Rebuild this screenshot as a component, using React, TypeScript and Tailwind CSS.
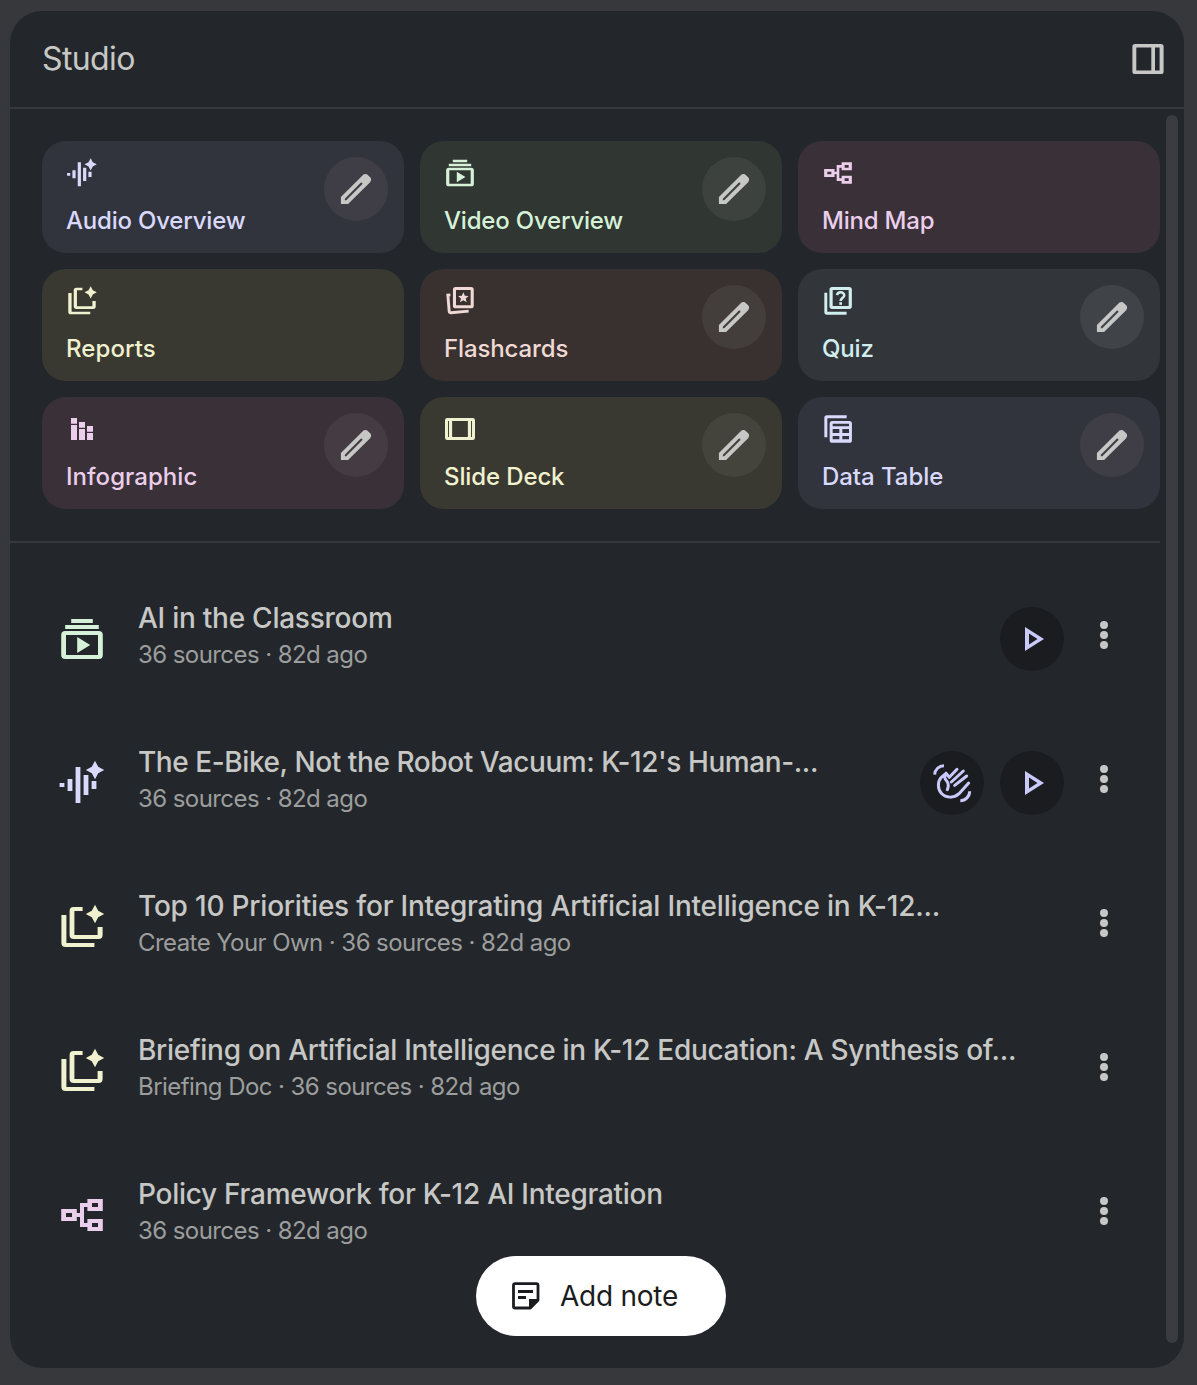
import type { ReactNode } from "react";

const STAR = "M18.5 10.1 16.9 7.1 13.9 5.5l3-1.6L18.5.9l1.6 3 3 1.6-3 1.6z";

const icons: Record<string, ReactNode> = {
  audio: (
    <>
      <path d="M.8 12h2.4v2H.8zM4.8 10h2.4v6H4.8zM8.8 4h2.4v18H8.8zM12.8 8h2.4v10h-2.4zM16.8 11h2.4v4h-2.4z" />
      <path d={STAR} />
    </>
  ),
  video: (
    <>
      <path fillRule="evenodd" d="M3.6 8h16.8a2 2 0 0 1 2 2v10a2 2 0 0 1-2 2H3.6a2 2 0 0 1-2-2V10a2 2 0 0 1 2-2zM4 10v10h16V10z" />
      <path d="M3.6 5h16.8v2H3.6zM6.6 2h10.8v2H6.6zM9.6 11v8l6.5-4z" />
    </>
  ),
  mindmap: (
    <path
      fillRule="evenodd"
      d="M1.6 9h7.8v2H11V6h3.7V4h7.7v6h-7.7V8H13v8h1.7v-2h7.7v6h-7.7v-2H11v-5H9.4v2H1.6zM4 11v2h3v-2zM17 6v2h3V6zM17 16v2h3v-2z"
    />
  ),
  reports: (
    <>
      <path d="M1.7 6h2.5v14h14v2H3.7a2 2 0 0 1-2-2z" />
      <path d="M12.3 2v2H8.2v12h11.6v-4h2.5v4a2 2 0 0 1-2 2H7.8a2 2 0 0 1-2-2V4a2 2 0 0 1 2-2z" />
      <path d={STAR} />
    </>
  ),
  flashcards: (
    <>
      <path fillRule="evenodd" d="M8.7 1.5h11.6a2 2 0 0 1 2 2v12a2 2 0 0 1-2 2H8.7a2 2 0 0 1-2-2v-12a2 2 0 0 1 2-2zM9 3.8v11.4h11V3.8z" />
      <path d="m14.5 5.4 1.15 2.6 2.75.25-2.1 1.85.65 2.75-2.45-1.45-2.45 1.45.65-2.75-2.1-1.85 2.75-.25z" />
      <path d="M4.8 7.4 2.9 7.6 3.9 19.7a1.2 1.2 0 0 0 1.3 1.1l13.3-1.2" fill="none" stroke="currentColor" strokeWidth="2.2" />
    </>
  ),
  quiz: (
    <>
      <path d="M1.75 5.8h2.2v14.3h14.5v2.2H3.75a2 2 0 0 1-2-2z" />
      <path fillRule="evenodd" d="M7.6 1.5h12.8a2 2 0 0 1 2 2V16a2 2 0 0 1-2 2H7.6a2 2 0 0 1-2-2V3.5a2 2 0 0 1 2-2zM8 3.8v12h12v-12z" />
      <path d="M11.3 7.6C11.5 6.1 12.6 5.5 14 5.5s2.7.9 2.7 2.2C16.7 9.5 14 9.7 14 12" fill="none" stroke="currentColor" strokeWidth="1.9" />
      <path d="M13 12.9h2v2h-2z" />
    </>
  ),
  infographic: (
    <path d="M3.75 3.75h4.5V8h-4.5zM3.75 9h4.5v11.25h-4.5zM9.75 6.75h4.5V11h-4.5zM9.75 12h4.5v8.25h-4.5zM15.75 9.75h4.5V14h-4.5zM15.75 15h4.5v5.25h-4.5z" />
  ),
  slides: (
    <path
      fillRule="evenodd"
      d="M2.5 3.75h19a1.75 1.75 0 0 1 1.75 1.75v13a1.75 1.75 0 0 1-1.75 1.75h-19A1.75 1.75 0 0 1 .75 18.5v-13A1.75 1.75 0 0 1 2.5 3.75zM3 6v12h.7V6zM6.1 6v12h11.8V6zM20.3 6v12h.7V6z"
    />
  ),
  table: (
    <>
      <path d="M1.75 18.25V3.75a2 2 0 0 1 2-2H18.5V4H4v14.25z" />
      <path
        fillRule="evenodd"
        d="M7.75 6h12.7a2 2 0 0 1 2 2v12.4a2 2 0 0 1-2 2H7.75a2 2 0 0 1-2-2V8a2 2 0 0 1 2-2zM8 8v2h12.25V8zM8 12v3h5v-3zM15.25 12v3h5v-3zM8 17.25v2.5h5v-2.5zM15.25 17.25v2.5h5v-2.5z"
      />
    </>
  ),
};

function Icon({ name, className }: { name: string; className: string }) {
  return (
    <svg viewBox="0 0 24 24" fill="currentColor" className={className}>
      {icons[name]}
    </svg>
  );
}

function EditIcon() {
  return (
    <svg viewBox="0 -960 960 960" fill="currentColor" className="size-10 text-[#c7c7c6]">
      <path
        fillRule="evenodd"
        d="M118-118v-172l530-529q12-11 26.5-17t30.5-6q16 0 31 6t26 18l57 56q12 11 17.5 26t5.5 30q0 16-5.5 30.5T819-645L290-118zM212-212h35L641-605 605-641 212-248z"
      />
    </svg>
  );
}

function WaveIcon() {
  return (
    <svg viewBox="0 0 192 192" fill="none" stroke="currentColor" strokeWidth="9" className="size-16">
      <path d="M44 71A28 28 0 0 1 72 44M121 149A28 28 0 0 0 149 121" />
      <path
        strokeLinecap="round"
        strokeLinejoin="round"
        d="M78 67 63 80C53 91 52 114 64 127C78 142 102 142 117 128L146 96M78 67C74 76 72 80 78 87C86 95 87 104 82 116M78 67 88 79 111 55M94 93 130 60M104 103 140 75"
      />
    </svg>
  );
}

const cards = [
  { icon: "audio", label: "Audio Overview", tracking: "tracking-[-0.2px]", color: "bg-[#32343d] text-[#d9d9fb]", edit: "bg-[#3f3e46]" },
  { icon: "video", label: "Video Overview", tracking: "tracking-[-0.2px]", color: "bg-[#303632] text-[#d5f2d8]", edit: "bg-[#3d423e]" },
  { icon: "mindmap", label: "Mind Map", tracking: "tracking-[-0.2px]", color: "bg-[#393137] text-[#ebceeb]" },
  { icon: "reports", label: "Reports", tracking: "tracking-[0.08px]", color: "bg-[#3a3931] text-[#f0f1cf]" },
  { icon: "flashcards", label: "Flashcards", tracking: "tracking-[-0.12px]", color: "bg-[#383130] text-[#f0d9d4]", edit: "bg-[#433d3b]" },
  { icon: "quiz", label: "Quiz", tracking: "tracking-[-0.15px]", color: "bg-[#32363b] text-[#d0eeee]", edit: "bg-[#404448]" },
  { icon: "infographic", label: "Infographic", tracking: "tracking-[0.05px]", color: "bg-[#393137] text-[#ebceeb]", edit: "bg-[#443c42]" },
  { icon: "slides", label: "Slide Deck", tracking: "tracking-[-0.12px]", color: "bg-[#3a3931] text-[#f0f1cf]", edit: "bg-[#45443c]" },
  { icon: "table", label: "Data Table", tracking: "tracking-[-0.05px]", color: "bg-[#32343d] text-[#d9d9fb]", edit: "bg-[#3f3e46]" },
];

const notes = [
  { icon: "video", color: "text-[#d5f2d8]", title: "AI in the Classroom", tracking: "tracking-[-0.25px]", meta: "36 sources · 82d ago", play: true },
  { icon: "audio", color: "text-[#d9d9fb]", title: "The E-Bike, Not the Robot Vacuum: K-12's Human-...", tracking: "tracking-[-0.42px]", meta: "36 sources · 82d ago", play: true, wave: true },
  { icon: "reports", color: "text-[#f0f1cf]", title: "Top 10 Priorities for Integrating Artificial Intelligence in K-12...", tracking: "tracking-[-0.2px]", meta: "Create Your Own · 36 sources · 82d ago" },
  { icon: "reports", color: "text-[#f0f1cf]", title: "Briefing on Artificial Intelligence in K-12 Education: A Synthesis of...", tracking: "tracking-[-0.29px]", meta: "Briefing Doc · 36 sources · 82d ago" },
  { icon: "mindmap", color: "text-[#ebceeb]", title: "Policy Framework for K-12 AI Integration", tracking: "tracking-[-0.27px]", meta: "36 sources · 82d ago" },
];

export default function App() {
  return (
    <main className="h-[1385px] w-[1197px] bg-[#37383b] pt-[11px] pl-[10px] font-['Inter',sans-serif] text-[#c7c7c6]">
      <div className="relative flex h-[1357px] w-[1174px] flex-col overflow-hidden rounded-[32px] bg-[#23272b]">
        <header className="flex h-[98px] shrink-0 items-center justify-between border-b-2 border-[#37383b] pr-5 pl-8">
          <h1 className="text-[32px] leading-10 tracking-[-0.6px]">Studio</h1>
          <svg viewBox="0 0 32 30" fill="currentColor" className="h-[30px] w-8">
            <path fillRule="evenodd" d="M3 0h26a2.6 2.6 0 0 1 2.6 2.6v24.8A2.6 2.6 0 0 1 29 30H3a2.6 2.6 0 0 1-2.6-2.6V2.6A2.6 2.6 0 0 1 3 0zM4.3 3.6v22.8h15V3.6zM23 3.6v22.8h4.6V3.6z" />
          </svg>
        </header>

        <div className="flex gap-[6px]">
          <div className="w-[1150px]">
            <section className="grid grid-cols-3 gap-4 border-b-2 border-[#37383b] pt-8 pb-8 pl-8">
              {cards.map((card) => (
                <div key={card.label} className={`flex h-28 justify-between rounded-3xl p-4 pl-6 ${card.color}`}>
                  <div>
                    <Icon name={card.icon} className="size-8" />
                    <p className={`mt-4 text-2xl leading-8 font-medium whitespace-nowrap ${card.tracking}`}>{card.label}</p>
                  </div>
                  {card.edit && (
                    <button className={`flex size-16 items-center justify-center rounded-full ${card.edit}`}>
                      <EditIcon />
                    </button>
                  )}
                </div>
              ))}
            </section>

            <section className="pt-6">
              {notes.map((note) => (
                <div key={note.title} className="flex h-36 items-center pr-8 pl-12">
                  <Icon name={note.icon} className={`size-12 shrink-0 ${note.color}`} />
                  <div className="mb-2 ml-8 grow whitespace-nowrap">
                    <h2 className={`text-[28px] leading-10 font-medium ${note.tracking}`}>{note.title}</h2>
                    <p className="text-2xl leading-[34px] tracking-[-0.57px] text-[#9c9d9d]">{note.meta}</p>
                  </div>
                  <div className="flex shrink-0 items-center gap-4">
                    {note.wave && (
                      <button className="flex size-16 items-center justify-center rounded-full bg-[#1b1c20] text-[#cac9fb]">
                        <WaveIcon />
                      </button>
                    )}
                    {note.play && (
                      <button className="flex size-16 items-center justify-center rounded-full bg-[#1b1c20] text-[#cac9fb]">
                        <svg viewBox="0 0 24 24" fill="currentColor" className="ml-1 size-6">
                          <path fillRule="evenodd" d="M3 0v24l19-12zM7 6.5v11L15.5 12z" />
                        </svg>
                      </button>
                    )}
                    <button className="mb-2 flex h-12 w-12 flex-col items-center justify-center gap-[2.5px]">
                      <span className="size-[7.5px] rounded-full bg-[#c7c7c6]" />
                      <span className="size-[7.5px] rounded-full bg-[#c7c7c6]" />
                      <span className="size-[7.5px] rounded-full bg-[#c7c7c6]" />
                    </button>
                  </div>
                </div>
              ))}
            </section>
          </div>
          <div className="mt-[6px] h-[1228px] w-3 rounded-full bg-[#3a3c41]" />
        </div>

        {/* floats above the list */}
        <button className="absolute bottom-8 left-[466px] flex h-20 w-[250px] items-center rounded-full bg-white pl-9 text-[#1b1c20]">
          <svg viewBox="0 0 28 28" className="size-7">
            <path d="M3 1.7h21.5a1.5 1.5 0 0 1 1.5 1.5V18l-8 8H3a1.5 1.5 0 0 1-1.5-1.5V3.2A1.5 1.5 0 0 1 3 1.7z" fill="none" stroke="currentColor" strokeWidth="2.8" />
            <path d="M17 27V17h10v2l-8 8zM6 8h15v3H6zM6 14h8v3H6z" fill="currentColor" />
          </svg>
          <span className="ml-5 text-[28px] leading-10 tracking-[-0.25px] whitespace-nowrap">Add note</span>
        </button>
      </div>
    </main>
  );
}
